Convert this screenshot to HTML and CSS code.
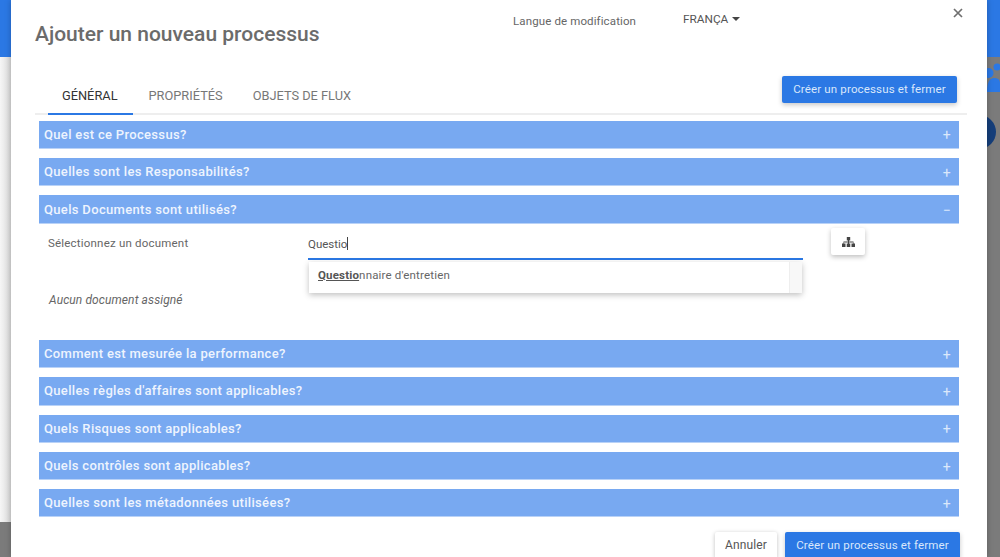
FILE: index.html
```html
<!DOCTYPE html>
<html lang="fr">
<head>
<meta charset="utf-8">
<title>Ajouter un nouveau processus</title>
<link rel="stylesheet" href="styles.css">
</head>
<body>
<div class="backdrop">
  <div class="topbar"></div>
  <div class="left-page"></div>
  <svg class="bg-logo" width="13" height="36" viewBox="0 0 13 36"><circle cx="1.500" cy="16" r="5" fill="#2b78e4"/><circle cx="10" cy="10" r="3.500" fill="#2b78e4"/><path d="M0 35 q0-14 7-14 q6 0 6 5 V35z" fill="#2b78e4"/></svg>
  <div class="bg-circle"></div>
</div>
<main class="modal">
  <header class="modal-head">
    <h1 class="title">Ajouter un nouveau processus</h1>
    <span class="lang-label">Langue de modification</span>
    <span class="lang-value">FRANÇA<i class="caret"></i></span>
    <svg class="close" width="10" height="10" viewBox="0 0 10 10"><path d="M1 1 L9 9 M9 1 L1 9" stroke="#6f6f6f" stroke-width="1.7"/></svg>
  </header>
  <div class="tabs-row">
    <nav class="tabs">
      <a class="tab active">GÉNÉRAL</a>
      <a class="tab">PROPRIÉTÉS</a>
      <a class="tab">OBJETS DE FLUX</a>
    </nav>
    <button class="btn primary top-btn">Créer un processus et fermer</button>
  </div>
  <section class="accordion">
    <div class="acc-head"><span>Quel est ce Processus?</span><span class="sign">+</span></div>
    <div class="acc-head"><span>Quelles sont les Responsabilités?</span><span class="sign">+</span></div>
    <div class="acc-head"><span>Quels Documents sont utilisés?</span><span class="sign">−</span></div>
    <div class="acc-body">
      <div class="doc-row">
        <label class="doc-label">Sélectionnez un document</label>
        <div class="doc-input">Questio<i class="cursor"></i></div>
        <button class="tree-btn" aria-label="Arborescence">
          <svg class="tree-icon" width="13" height="10" viewBox="0 0 13 10"><path fill="#444" d="M4.800 0h3.400v3.400H7V4.500h4.500V6.500H13V10H9.500V6.500H11V5.500H7V6.500H8.250V10H4.750V6.500H6V5.500H2V6.500H3.500V10H0V6.500H1.500V4.500H6V3.400H4.800z"/></svg>
        </button>
        <div class="suggest">
          <div class="suggest-item"><b>Questio</b>nnaire d'entretien</div>
          <div class="suggest-scroll"></div>
        </div>
      </div>
      <p class="empty">Aucun document assigné</p>
    </div>
    <div class="acc-head"><span>Comment est mesurée la performance?</span><span class="sign">+</span></div>
    <div class="acc-head"><span>Quelles règles d'affaires sont applicables?</span><span class="sign">+</span></div>
    <div class="acc-head"><span>Quels Risques sont applicables?</span><span class="sign">+</span></div>
    <div class="acc-head"><span>Quels contrôles sont applicables?</span><span class="sign">+</span></div>
    <div class="acc-head"><span>Quelles sont les métadonnées utilisées?</span><span class="sign">+</span></div>
  </section>
  <footer class="modal-foot">
    <button class="btn plain">Annuler</button>
    <button class="btn primary">Créer un processus et fermer</button>
  </footer>
</main>
</body>
</html>
```

FILE: styles.css
```css
* { box-sizing: border-box; }
html, body { margin: 0; height: 100%; overflow: hidden; }
body { width: 1000px; height: 557px; position: relative; font-family: Roboto, "Liberation Sans", sans-serif; color: #666; }

.backdrop { position: absolute; inset: 0; background: #7b7b7b; overflow: hidden; }
.topbar { height: 57px; background: #2b78e4; }
.left-page { position: absolute; left: 0; top: 57px; width: 11px; height: 465px; background: linear-gradient(90deg, #f6f6f6, #d9d9d9); }
.bg-logo { position: absolute; left: 987px; top: 57px; }
.bg-circle { position: absolute; left: 962px; top: 115px; width: 34px; height: 34px; border-radius: 50%; background: #153e7a; }

.modal { position: absolute; left: 11px; top: 0; width: 976px; height: 557px; overflow: hidden; background: #fff; padding: 0 24px; box-shadow: 0 0 6px rgba(0,0,0,.25); }

.modal-head { position: relative; height: 76px; }
.title { margin: 0; position: absolute; left: 0; top: 21px; font-size: 21px; line-height: 26px; font-weight: 500; color: #6b6b6b; white-space: nowrap; }
.lang-label { position: absolute; left: 478px; top: 14px; font-size: 11.5px; line-height: 15px; letter-spacing: .12px; color: #666; white-space: nowrap; }
.lang-value { position: absolute; left: 648px; top: 12px; font-size: 11.8px; line-height: 15px; color: #555; white-space: nowrap; }
.caret { display: inline-block; margin-left: 4px; vertical-align: 2px; border-left: 4px solid transparent; border-right: 4px solid transparent; border-top: 4px solid #444; }
.close { position: absolute; left: 918px; top: 8px; }

.tabs-row { display: flex; justify-content: space-between; align-items: flex-start; height: 39px; margin-right: -4px; border-bottom: 2px solid #eee; }
.tabs { display: flex; padding-left: 13px; }
.tab { height: 39px; padding: 12px 15px 0; font-size: 12.8px; line-height: 15px; color: #777; white-space: nowrap; }
.tab.active { padding-left: 14px; margin-right: 1px; color: #333; border-bottom: 2px solid #2b78e4; }
.btn { border: 0; border-radius: 2px; font-family: inherit; font-size: 11.5px; letter-spacing: .15px; line-height: 15px; white-space: nowrap; }
.primary { background: #2b78e4; color: #d9e7fb; box-shadow: 0 2px 5px rgba(0,0,0,.22); }
.top-btn { width: 175px; height: 27px; margin-right: 10px; padding: 0; }

.accordion { margin: 5.8px 0 0 4px; width: 920px; }
.acc-head { display: flex; justify-content: space-between; align-items: center; height: 28.3px; margin-bottom: 9px; padding: 0 8px 0 5px; background: #78a9f1; border-bottom: 1px solid #b9d2f7; color: #eef4fe; font-size: 13px; font-weight: 500; letter-spacing: .33px; }
.sign { font-weight: 400; font-size: 14px; line-height: 14px; margin-top: 2px; color: #dbe8fb; }

.acc-body { height: 116.300px; margin-top: -9px; padding-top: 4px; font-size: 11.5px; color: #666; }
.doc-row { position: relative; display: flex; height: 32px; padding-left: 9px; }
.doc-label { width: 260px; padding-top: 8px; line-height: 15px; letter-spacing: .2px; }
.doc-input { width: 495px; height: 32px; padding-top: 9px; line-height: 15px; color: #555; border-bottom: 2px solid #2b78e4; }
.cursor { display: inline-block; width: 1px; height: 13px; background: #444; vertical-align: -2px; }
.tree-btn { width: 34px; height: 27px; margin-left: 28px; padding: 1px 0 0; border: 0; border-radius: 2px; background: #fff; box-shadow: 0 2px 5px rgba(0,0,0,.25); }
.tree-icon { display: block; margin: 0 auto; }
.suggest { position: absolute; left: 270px; top: 34px; width: 493px; height: 31px; display: flex; background: #fff; box-shadow: 0 2px 6px rgba(0,0,0,.25); z-index: 2; }
.suggest-item { flex: 1; padding: 6px 0 0 9px; line-height: 15px; letter-spacing: .17px; color: #666; }
.suggest-item b { font-weight: 700; color: #555; text-decoration: underline; }
.suggest-scroll { width: 13px; background: #f8f8f8; border-left: 1px solid #eee; }
.empty { margin: 33px 0 0 10px; font-size: 12px; line-height: 15px; font-style: italic; letter-spacing: .1px; color: #666; }

.modal-foot { display: flex; justify-content: flex-end; gap: 8px; margin: 14.5px 3px 0 0; }
.btn.plain { background: #fff; color: #555; box-shadow: 0 1px 4px rgba(0,0,0,.25); width: 62px; height: 27px; padding: 0; font-size: 12px; }
.modal-foot .primary { width: 175px; height: 27px; padding: 0; }
```
